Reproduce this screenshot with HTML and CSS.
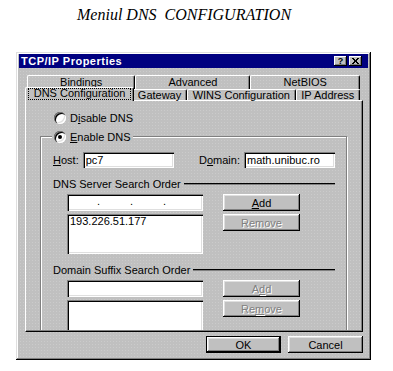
FILE: index.html
```html
<!DOCTYPE html>
<html lang="ro">
<head>
  <meta charset="UTF-8" />
  <title>Meniul DNS CONFIGURATION</title>
  <meta name="viewport" content="width=device-width, initial-scale=1" />
  <link rel="stylesheet" href="styles.css">
</head>
<body>
  <p class="caption">Meniul DNS&nbsp; CONFIGURATION</p>

  <div class="dialog">
    <div class="titlebar">
      <span class="title">TCP/IP Properties</span>
      <span class="title-btn help">?</span>
      <span class="title-btn close">
        <svg width="7" height="6" viewBox="0 0 7 6"><path d="M0 0L6 6M1 0L7 6M6 0L0 6M7 0L1 6" stroke="#000" stroke-width="1"/></svg>
      </span>
    </div>

    <!-- Tabs, two rows -->
    <div class="tabs">
      <div class="tab-row back">
        <div class="tab">Bindings</div>
        <div class="tab">Advanced</div>
        <div class="tab">NetBIOS</div>
      </div>
      <div class="tab-row front">
        <div class="tab selected"><span class="focus">DNS Configuration</span></div>
        <div class="tab">Gateway</div>
        <div class="tab">WINS Configuration</div>
        <div class="tab">IP Address</div>
      </div>
    </div>

    <div class="panel">
      <div class="panel-body">
        <div class="radio-row"><span class="radio"></span><span>D<u>i</u>sable DNS</span></div>

        <div class="group">
          <div class="legend"><span class="radio checked"></span><span><u>E</u>nable DNS</span></div>

          <div class="host-row">
            <div class="field"><label><u>H</u>ost:</label><div class="input">pc7</div></div>
            <div class="field"><label>D<u>o</u>main:</label><div class="input">math.unibuc.ro</div></div>
          </div>

          <div class="section"><span>DNS Server Search Order</span></div>
          <div class="list-row">
            <div class="list-col">
              <div class="input ip"><span>.</span><span>.</span><span>.</span><span></span></div>
              <div class="listbox">193.226.51.177</div>
            </div>
            <div class="btn-col">
              <div class="btn"><span><u>A</u>dd</span></div>
              <div class="btn disabled"><span>Remove</span></div>
            </div>
          </div>

          <div class="section"><span>Domain Suffix Search Order</span></div>
          <div class="list-row">
            <div class="list-col">
              <div class="input"></div>
              <div class="listbox"></div>
            </div>
            <div class="btn-col">
              <div class="btn disabled"><span>A<u>d</u>d</span></div>
              <div class="btn disabled"><span>Re<u>m</u>ove</span></div>
            </div>
          </div>
        </div>
      </div>
    </div>

    <div class="footer">
      <div class="btn default">OK</div>
      <div class="btn">Cancel</div>
    </div>
  </div>
</body>
</html>
```

FILE: styles.css
```css
body {
  margin: 0;
  background: #fff;
  font-family: "Liberation Sans", Arial, sans-serif;
  font-size: 11px;
  color: #000;
}

.caption {
  margin: 0;
  padding: 5px 0 0 77px;
  font-family: "Liberation Serif", "Times New Roman", serif;
  font-style: italic;
  font-size: 16px;
  line-height: 19px;
}

/* Window frame */
.dialog {
  width: 355px;
  height: 308px;
  margin: 28px 0 0 16px;
  box-sizing: border-box;
  padding: 2px 3px;
  background: #c0c0c0 radial-gradient(#cbcbcb 0.5px, transparent 0.9px) 0 0 / 3px 3px;
  box-shadow: inset -1px -1px #000, inset 1px 1px #dfdfdf, inset -2px -2px #808080, inset 2px 2px #fff;
}

.titlebar {
  display: flex;
  align-items: center;
  height: 14px;
  padding: 0 6px 0 2px;
  background: #000080;
  color: #fff;
  font-weight: bold;
}

.title {
  flex: 1;
  letter-spacing: 0.5px;
}

.title-btn {
  display: flex;
  align-items: center;
  justify-content: center;
  width: 13px;
  height: 10px;
  margin-left: 2px;
  background: #c0c0c0;
  color: #000;
  font-size: 9px;
  line-height: 10px;
  box-shadow: inset -1px -1px #000, inset 1px 1px #fff, inset -2px -2px #808080;
}

/* Tabs */
.tabs {
  margin-top: 7px;
  padding: 0 8px;
}

.tab-row {
  display: flex;
}

.tab-row.back {
  height: 14px;
}

.tab-row.front {
  height: 11px;
}

.tab {
  flex: 1 1 auto;
  box-sizing: border-box;
  text-align: center;
  white-space: nowrap;
  border-top: 1px solid #fff;
  border-left: 1px solid #fff;
  border-right: 1px solid #000;
  border-radius: 2px 2px 0 0;
  box-shadow: inset -1px 0 #808080;
}

.back .tab {
  line-height: 12px;
}

.front .tab {
  line-height: 10px;
}

.tab.selected {
  position: relative;
  z-index: 1;
  height: 14px;
  margin: -2px -2px 0;
  background: #c0c0c0;
  line-height: 11px;
}

.focus {
  display: block;
  margin: 0 2px;
  padding: 0 1px;
  outline: 1px dotted #000;
  outline-offset: -1px;
  height: 12px;
}

/* Page */
.panel {
  height: 232px;
  margin: 0 5px 0 6px;
  box-sizing: border-box;
  border-top: 1px solid #fff;
  border-left: 1px solid #fff;
  border-right: 1px solid #000;
  border-bottom: 1px solid #000;
}

.panel-body {
  height: 100%;
  box-sizing: border-box;
  border-right: 1px solid #808080;
  border-bottom: 1px solid #808080;
  padding-top: 11px;
  overflow: hidden;
}

.radio-row {
  display: flex;
  align-items: center;
  gap: 4px;
  height: 12px;
  padding-left: 28px;
}

.radio {
  display: flex;
  align-items: center;
  justify-content: center;
  width: 12px;
  height: 12px;
  flex: none;
  border-radius: 50%;
  background: #fff;
  box-shadow: inset 1px 1px #808080, inset 2px 2px #000, inset -1px -1px #fff, inset -2px -2px #dfdfdf;
}

.radio.checked::after {
  content: "";
  width: 4px;
  height: 4px;
  border-radius: 50%;
  background: #000;
}

.group {
  margin: 12px 14px 0;
  padding: 0 11px 0 12px;
  border: 1px solid #808080;
  box-shadow: inset 1px 1px #fff, 1px 1px #fff;
}

.legend {
  display: flex;
  align-items: center;
  gap: 4px;
  width: fit-content;
  height: 13px;
  margin: -7px 0 0 -1px;
  padding: 0 2px;
  background: #c0c0c0;
}

.host-row {
  display: flex;
  justify-content: space-between;
  margin-top: 9px;
}

.field {
  display: flex;
  align-items: center;
  gap: 4px;
}

.input {
  box-sizing: border-box;
  width: 91px;
  height: 16px;
  padding: 0 3px;
  line-height: 16px;
  background: #fff;
  box-shadow: inset 1px 1px #808080, inset 2px 2px #000, inset -1px -1px #fff, inset -2px -2px #dfdfdf;
}

.section {
  display: flex;
  align-items: center;
  gap: 3px;
  height: 13px;
  margin-top: 9px;
}

.section::after {
  content: "";
  flex: 1;
  border-top: 1px solid #000;
  border-bottom: 1px solid #808080;
}

.list-row {
  display: flex;
  gap: 20px;
  margin-top: 4px;
  padding-left: 14px;
}

.list-col {
  display: flex;
  flex-direction: column;
  gap: 3px;
  width: 136px;
}

.list-col .input {
  width: 100%;
  height: 17px;
}

.input.ip {
  display: grid;
  grid-template-columns: repeat(4, 1fr);
  padding: 0 2px;
  line-height: 14px;
}

.input.ip span {
  text-align: right;
  padding-right: 2px;
}

.listbox {
  box-sizing: border-box;
  height: 40px;
  padding: 2px 3px;
  line-height: 11px;
  background: #fff;
  box-shadow: inset 1px 1px #808080, inset 2px 2px #000, inset -1px -1px #fff, inset -2px -2px #dfdfdf;
}

.btn-col {
  display: flex;
  flex-direction: column;
  gap: 3px;
  width: 77px;
}

.btn {
  box-sizing: border-box;
  display: flex;
  align-items: center;
  justify-content: center;
  height: 17px;
  background: #c0c0c0;
  box-shadow: inset -1px -1px #000, inset 1px 1px #fff, inset -2px -2px #808080, inset 2px 2px #dfdfdf;
}

.btn.disabled {
  color: #808080;
  text-shadow: 1px 1px #fff;
}

.btn.default {
  border: 1px solid #000;
}

.footer {
  display: flex;
  justify-content: flex-end;
  gap: 7px;
  margin-top: 4px;
  padding-right: 5px;
}

.footer .btn {
  width: 75px;
}
```
